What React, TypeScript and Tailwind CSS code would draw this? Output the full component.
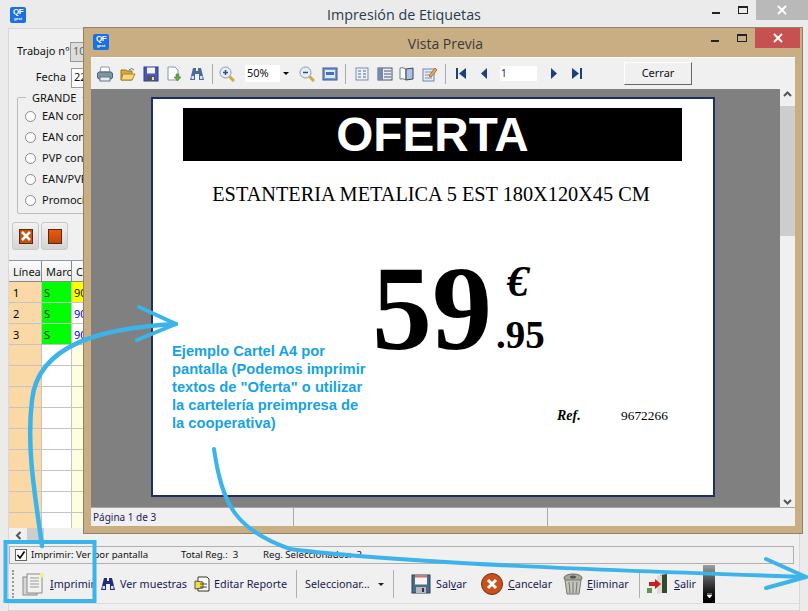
import React from "react";

const Logo = () => (
  <div className="w-4 h-4 rounded-[2px] bg-[#1c6fe0] flex flex-col items-center justify-center leading-none text-white font-bold text-[8px] [font-family:'Liberation_Sans',sans-serif]">
    <span className="tracking-[-0.5px] h-[9px]">QF</span>
    <span className="text-[4px] h-[5px]">gest</span>
  </div>
);

const Caption = ({ dark }: { dark?: boolean }) => (
  <div className="flex items-start h-full">
    <svg width="46" height="20" viewBox="0 0 46 20">
      <rect x="2" y="12" width="8" height="2" fill="#222" />
      <rect x="28.5" y="6.5" width="9" height="7" fill="none" stroke="#222" />
      <rect x="28" y="6" width="10" height="2" fill="#222" />
    </svg>
    <div className={`${dark ? "w-[45px] bg-[#c75050]" : "w-[52px] bg-[#b9b9b9]"} h-5 flex items-center justify-center`}>
      <svg width="10" height="10" viewBox="0 0 10 10">
        <path d="M1 1 L9 9 M9 1 L1 9" stroke="#fff" strokeWidth="2" />
      </svg>
    </div>
  </div>
);

const Radio = ({ label }: { label: string }) => (
  <div className="flex items-center gap-[6px] h-[21px]">
    <span className="w-[11px] h-[11px] rounded-full bg-white border border-[#8a8a8a]" />
    <span className="whitespace-nowrap">{label}</span>
  </div>
);

const I = ({ children, w = 16 }: { children: React.ReactNode; w?: number }) => (
  <svg width={w} height="16" viewBox={`0 0 ${w} 16`} className="shrink-0">
    {children}
  </svg>
);

const PrintI = () => (
  <I>
    <path d="M4 1h8l1 5H3z" fill="#fff" stroke="#8899aa" />
    <rect x="0.5" y="6" width="15" height="7" rx="2" fill="#7f93ad" stroke="#4d6078" />
    <rect x="3" y="11" width="10" height="4" fill="#e8edf3" stroke="#66778c" />
    <rect x="10" y="8" width="2" height="2" fill="#3c3" />
  </I>
);
const FolderI = () => (
  <I>
    <path d="M1 4h5l1 1h5v9H1z" fill="#d9a93c" stroke="#9a7420" />
    <path d="M3 8h12l-3 6H1z" fill="#f6d77b" stroke="#a8852c" />
    <path d="M9 4 q3 -3 5 0" fill="none" stroke="#5c7aa0" />
  </I>
);
const SaveI = () => (
  <I>
    <rect x="1" y="1" width="14" height="14" fill="#4a58b8" stroke="#2f3a80" />
    <rect x="4" y="1.5" width="8" height="6" fill="#f3f3f3" />
    <rect x="4" y="10" width="8" height="5" fill="#555" />
    <rect x="9" y="11" width="2" height="3" fill="#ddd" />
  </I>
);
const ExportI = () => (
  <I>
    <path d="M2 1h7l3 3v10H2z" fill="#fff" stroke="#8899aa" />
    <path d="M10 8h3v3h2l-3.5 4L8 11h2z" fill="#66a844" stroke="#3c7a2a" strokeWidth="0.5" />
  </I>
);
const BinocI = ({ dark }: { dark?: boolean }) => (
  <I>
    <path d="M4 2h3v3h2V2h3l3 12h-5V8H6v6H1z" fill={dark ? "#1e2f78" : "#4a6a9e"} />
    <rect x="2.5" y="10" width="2.5" height="3" fill="#d5e0f0" />
    <rect x="11" y="10" width="2.5" height="3" fill="#d5e0f0" />
  </I>
);
const ZoomI = ({ minus }: { minus?: boolean }) => (
  <I>
    <circle cx="6.5" cy="6.5" r="5.5" fill="#e8eef6" stroke="#8a9aac" />
    <path d="M10.5 10.5 L15 15" stroke="#d0a83c" strokeWidth="3" />
    <path d={minus ? "M4 6.5h5" : "M4 6.5h5M6.5 4v5"} stroke="#2f4f80" strokeWidth="1.5" />
  </I>
);
const PageI = ({ kind }: { kind: number }) => (
  <I>
    {kind === 0 && (
      <>
        <rect x="1" y="2" width="14" height="12" fill="#6f9ae0" stroke="#41577c" />
        <rect x="3" y="4" width="10" height="8" fill="#dfe9f8" />
        <rect x="4" y="6" width="8" height="3" fill="#3f6fc0" />
      </>
    )}
    {kind === 1 && (
      <>
        <rect x="2" y="2" width="12" height="12" fill="#eef2f8" stroke="#7d8da4" />
        <path d="M4 5h3M9 5h3M4 8h3M9 8h3M4 11h3M9 11h3" stroke="#4a6a9e" />
      </>
    )}
    {kind === 2 && (
      <>
        <rect x="1" y="2" width="14" height="12" fill="#eef2f8" stroke="#44556e" />
        <rect x="1" y="2" width="5" height="12" fill="#7389ad" />
        <path d="M7 5h7M7 8h7M7 11h7" stroke="#44556e" />
      </>
    )}
    {kind === 3 && (
      <>
        <path d="M1 2 q3 -1 6 1 v11 q-3 -2 -6 -1z" fill="#fff" stroke="#777" />
        <path d="M7 3 l7 -1 v11 l-7 1z" fill="#a9c3ea" stroke="#444" />
      </>
    )}
    {kind === 4 && (
      <>
        <rect x="1" y="3" width="11" height="12" fill="#e4ecf7" stroke="#6f86a8" />
        <path d="M3 6h7M3 9h7M3 12h7" stroke="#7f93ad" />
        <path d="M7 10 L13 2 L15 4 L9 11z" fill="#e6b93c" stroke="#a33" strokeWidth="0.7" />
      </>
    )}
  </I>
);
const Nav = ({ d, w = 10 }: { d: string; w?: number }) => (
  <svg width={w} height="11" viewBox={`0 0 ${w} 11`}>
    <path d={d} fill="#1d3f7c" />
  </svg>
);

const Row = ({ n, s, c, color }: { n?: string; s?: boolean; c?: string; color?: string }) => (
  <div className="flex h-[21px] border-b border-[#c4c4c4]">
    <div className="w-[33px] bg-[#fbd9a6] border-r border-[#c4c4c4] pl-[4px] leading-[21px] text-black">{n}</div>
    <div className={`w-[30px] border-r border-[#c4c4c4] pl-[2px] leading-[21px] ${s ? "bg-[#00ff00]" : "bg-white"}`}>{s ? "S" : ""}</div>
    <div className={`flex-1 pl-[2px] leading-[21px] ${color ?? "bg-[#fffde0]"}`}>{c}</div>
  </div>
);

const ToolBtn = ({ icon, label, className = "" }: { icon: React.ReactNode; label: React.ReactNode; className?: string }) => (
  <div className={`flex items-center gap-[4px] whitespace-nowrap shrink-0 ${className}`}>
    {icon}
    <span>{label}</span>
  </div>
);

export default function App() {
  const blank = Array.from({ length: 9 });
  return (
    <div className="relative w-[808px] h-[611px] overflow-hidden bg-[#ebebeb] text-[11px] text-[#111] [font-family:'Noto_Sans','Liberation_Sans',sans-serif]">
      {/* main window */}
      <div className="flex flex-col h-full">
        <div className="relative h-[28px] shrink-0 flex items-start justify-between pl-[10px]">
          <div className="pt-[7px]"><Logo /></div>
          <div className="absolute inset-x-0 top-[4px] text-center text-[14.3px] text-[#2b3a4a] [font-family:'Open_Sans',sans-serif]">Impresión de Etiquetas</div>
          <div className="relative"><Caption /></div>
        </div>
        <div className="mx-[8px] flex-1 bg-[#f0f0f0] border border-[#d8d8d8] flex flex-col min-h-0">
          <div className="pl-[8px] pt-[10px] h-[231px] shrink-0">
            <div className="flex items-center h-[25px] whitespace-nowrap">
              <span className="w-[53px]">Trabajo nº</span>
              <span className="border border-[#999] bg-[#ddd] w-[60px] h-[20px] px-[2px] text-[#666]">10</span>
            </div>
            <div className="flex items-center h-[25px] pt-[2px]">
              <span className="w-[49px] pl-[18px] text-right">Fecha</span>
              <span className="border border-[#999] bg-white w-[60px] h-[20px] px-[2px] ml-[5px]">22</span>
            </div>
            <div className="relative mt-[8px] border border-[#bcbcbc] rounded-[2px] w-[100px] h-[117px] pl-[7px] pt-[8px]">
              <span className="absolute left-[8px] -top-[8px] bg-[#f0f0f0] px-[6px]">GRANDE</span>
              <Radio label="EAN con" />
              <Radio label="EAN con" />
              <Radio label="PVP con" />
              <Radio label="EAN/PVP" />
              <Radio label="Promoción" />
            </div>
            <div className="flex gap-[2px] mt-[8px] -ml-[5px]">
              <div className="w-[27px] h-[28px] rounded-[3px] bg-gradient-to-b from-[#f2f2f2] to-[#d4d4d4] border border-[#c8c8c8] flex items-center justify-center">
                <div className="w-[14px] h-[15px] bg-[#c8500e] border border-[#5a2a10] flex items-center justify-center">
                  <svg width="10" height="10" viewBox="0 0 10 10"><path d="M1 1L9 9M9 1L1 9" stroke="#fff" strokeWidth="2.5" /></svg>
                </div>
              </div>
              <div className="w-[27px] h-[28px] rounded-[3px] bg-gradient-to-b from-[#f2f2f2] to-[#d4d4d4] border border-[#c8c8c8] flex items-center justify-center">
                <div className="w-[14px] h-[15px] bg-gradient-to-b from-[#ee5a08] to-[#b8480e] border border-[#5a2a10]" />
              </div>
            </div>
          </div>
          <div className="flex-1 min-h-0 overflow-hidden border-t border-[#8a9bb0] bg-white">
            <div className="flex h-[21px] border-b border-[#8a8a8a] bg-gradient-to-b from-[#fafafa] to-[#ececec]">
              <div className="w-[33px] border-r border-[#8a8a8a] pl-[4px] leading-[21px] overflow-hidden">Línea</div>
              <div className="w-[30px] border-r border-[#8a8a8a] pl-[4px] leading-[21px] overflow-hidden">Marc</div>
              <div className="flex-1 pl-[4px] leading-[21px]">C</div>
            </div>
            <Row n="1" s c="90" color="bg-[#ffff00]" />
            <Row n="2" s c="90" color="bg-white text-[#0000ff]" />
            <Row n="3" s c="90" color="bg-white text-[#0000ff]" />
            {blank.map((_, i) => <Row key={i} />)}
          </div>
          <div className="h-[15px] shrink-0 bg-[#f0f0f0] flex items-center pl-[6px]">
            <svg width="7" height="9" viewBox="0 0 7 9"><path d="M5.5 1L2 4.5 5.5 8" fill="none" stroke="#555" strokeWidth="2" /></svg>
            <div className="ml-[5px] w-[17px] h-[15px] bg-[#cdcdcd]" />
          </div>
          <div className="h-[18px] shrink-0 mt-[3px] mr-[5px] border border-[#b0b0b0] bg-[#f0f0f0] flex items-center text-[9.6px] pl-[5px] whitespace-nowrap">
            <span className="w-[12px] h-[12px] border border-[#666] bg-white flex items-center justify-center mr-[4px]">
              <svg width="10" height="10" viewBox="0 0 10 10"><path d="M1.5 5 L4 8 L8.5 1.5" fill="none" stroke="#000" strokeWidth="1.6" /></svg>
            </span>
            <span className="w-[150px]">Imprimir: Ver por pantalla</span>
            <span className="w-[82px]">Total Reg.:&nbsp; 3</span>
            <span>Reg. Seleccionados:&nbsp; 3</span>
          </div>
          <div className="h-[38px] shrink-0 mt-[1px] flex items-center text-[10.8px] text-[#1a1a50]">
            <div className="w-px h-[28px] border-l-2 border-dotted border-[#999] ml-[3px] mr-[8px]" />
            <ToolBtn className="w-[77px]" icon={<svg width="24" height="24" viewBox="0 0 24 24"><rect x="1" y="5" width="14" height="18" fill="#d8d8d8" stroke="#8a8a8a" /><rect x="5" y="2" width="15" height="19" fill="#f2f2ee" stroke="#8a8a8a" /><path d="M8 6h9M8 9h9M8 12h9M8 15h9" stroke="#999" /><circle cx="20" cy="3" r="2.5" fill="#f6e9a0" /></svg>} label={<><u>I</u>mprimir</>} />
            <ToolBtn className="w-[94px] ml-[1px] gap-[3px]" icon={<BinocI dark />} label="Ver muestras" />
            <ToolBtn className="w-[102px] gap-[3px]" icon={<svg width="16" height="16" viewBox="0 0 16 16"><path d="M4 1h9l2 2v12H4z" fill="#fff" stroke="#333" /><path d="M1 5l8 1v6l-8 1z" fill="#f0e040" stroke="#555" /><path d="M6 8h7M6 11h7" stroke="#444" /></svg>} label="Editar Reporte" />
            <div className="w-px h-[28px] bg-[#b0b0b0] shrink-0" />
            <div className="flex items-center w-[96px] pl-[8px] gap-[8px] whitespace-nowrap shrink-0">
              <span>Seleccionar...</span>
              <span className="w-0 h-0 border-x-[3px] border-x-transparent border-t-[3px] border-t-[#222]" />
            </div>
            <div className="w-px h-[28px] bg-[#b0b0b0] shrink-0" />
            <ToolBtn className="w-[87px] pl-[17px] gap-[5px]" icon={<svg width="20" height="20" viewBox="0 0 20 20"><rect x="1" y="1" width="18" height="18" fill="#4a6a8a" stroke="#2f4358" /><rect x="4" y="1.5" width="12" height="9" fill="#f4f4f4" /><rect x="4" y="1.5" width="12" height="2" fill="#d07070" /><rect x="5" y="13" width="10" height="6" fill="#b8b8b8" /><rect x="11" y="14" width="2" height="4" fill="#333" /></svg>} label={<>Sal<u>v</u>ar</>} />
            <ToolBtn className="w-[82px] gap-[5px]" icon={<svg width="22" height="22" viewBox="0 0 22 22"><circle cx="11" cy="11" r="10.5" fill="#c8501c" stroke="#7a2f10" /><path d="M7 7L15 15M15 7L7 15" stroke="#fff" strokeWidth="3" /></svg>} label={<><u>C</u>ancelar</>} />
            <ToolBtn className="w-[76px] gap-[4px]" icon={<svg width="20" height="24" viewBox="0 0 20 24"><ellipse cx="10" cy="6" rx="9" ry="4" fill="#a8a89c" stroke="#666" /><ellipse cx="10" cy="5" rx="3" ry="1.5" fill="#555" /><path d="M2 8l2 14h12l2-14z" fill="#c4c4b8" stroke="#777" /><path d="M6 10l1 11M10 10v11M14 10l-1 11" stroke="#777" /></svg>} label={<><u>E</u>liminar</>} />
            <div className="w-px h-[28px] bg-[#b0b0b0] shrink-0" />
            <ToolBtn className="w-[63px] pl-[7px] gap-[5px]" icon={<svg width="22" height="22" viewBox="0 0 22 22"><path d="M13 2l7-1v19h-7z" fill="#2f4a2f" /><path d="M10 3l5-1v18l-5 1z" fill="#dcdcd4" /><path d="M2 9h6V6l6 5-6 5v-3H2z" fill="#c82020" /><rect x="0" y="15" width="5" height="5" fill="#5a9a50" /></svg>} label={<><u>S</u>alir</>} />
            <div className="w-[12px] h-[38px] shrink-0 bg-gradient-to-b from-[#a0a0a0] to-[#000] flex items-end justify-center pb-[4px]">
              <svg width="7" height="6" viewBox="0 0 7 6"><path d="M1 0h5M1 2h5L3.5 5z" stroke="#fff" fill="#fff" strokeWidth="0.7" /></svg>
            </div>
          </div>
          <div className="h-[7px] shrink-0 border-t border-[#dcdcdc]" />
        </div>
      </div>

      {/* preview window */}
      <div className="absolute left-[83px] top-[27px] w-[720px] h-[507px] bg-[#c9ae84] border border-[#8f826c] flex flex-col px-[7px] pb-[7px]">
        <div className="relative h-[29px] shrink-0 flex items-start justify-between -mr-[5px]">
          <div className="pt-[6px] pl-[2px]"><Logo /></div>
          <div className="absolute inset-x-0 top-[6px] text-center text-[14px] leading-[19px] text-[#3a3a3a] [font-family:'Open_Sans',sans-serif]">Vista Previa</div>
          <div className="relative"><Caption dark /></div>
        </div>
        <div className="flex-1 min-h-0 bg-[#f0f0f0] flex flex-col border-t border-[#fff]">
          <div className="h-[31px] shrink-0 flex items-center pl-[6px] gap-[7px]">
            <PrintI /><FolderI /><SaveI /><ExportI /><BinocI />
            <div className="w-px h-[20px] bg-[#a8a8a8] shrink-0" />
            <div className="-ml-[1px]"><ZoomI /></div>
            <div className="ml-[3px] w-[47px] h-[17px] bg-white flex items-center justify-between pl-[2px] text-[11px] text-[#111] overflow-hidden">
              <span>50%</span>
              <span className="w-[12px] h-[17px] bg-[#f0f0f0] flex items-center justify-center"><span className="w-0 h-0 border-x-[3px] border-x-transparent border-t-[3px] border-t-black" /></span>
            </div>
            <ZoomI minus /><PageI kind={0} />
            <div className="w-px h-[20px] bg-[#a8a8a8] shrink-0" />
            <div className="ml-[1px]"><PageI kind={1} /></div>
            <PageI kind={2} />
            <div className="-ml-[1px]"><PageI kind={3} /></div>
            <PageI kind={4} />
            <div className="w-px h-[20px] bg-[#a8a8a8] shrink-0" />
            <div className="ml-[3px] flex items-center gap-[14px]">
              <Nav d="M0 0h2v11H0zM10 0v11L3 5.5z" />
              <Nav d="M7 0v11L1 5.5z" w={7} />
            </div>
            <div className="ml-[6px] w-[37px] h-[15px] bg-white text-[10px] pl-[1px] leading-[15px] text-[#112266]">1</div>
            <div className="flex items-center gap-[14px] ml-[7px]">
              <Nav d="M0 0v11L6 5.5z" w={7} />
              <Nav d="M0 0v11L7 5.5zM8 0h2v11H8z" />
            </div>
            <div className="ml-[35px] w-[68px] h-[23px] bg-[#f0f0f0] border border-t-white border-l-white border-r-[#666] border-b-[#666] flex items-center justify-center text-[11px]">Cerrar</div>
          </div>
          <div className="flex-1 min-h-0 flex">
            <div className="flex-1 bg-[#808080] pl-[60px] pt-[8px] pb-[10px]">
              <div className="w-[564px] h-[400px] bg-white border-2 border-[#1d2f66] flex flex-col items-center [font-family:'Liberation_Serif',serif] text-black">
                <div className="mt-[9px] ml-[-1px] w-[499px] h-[53px] shrink-0 bg-black flex items-center justify-center text-white font-bold text-[47.7px] [font-family:'Liberation_Sans',sans-serif] leading-none">OFERTA</div>
                <div className="mt-[21px] -ml-[4px] text-[20.3px] leading-[24px] whitespace-nowrap">ESTANTERIA METALICA 5 EST 180X120X45 CM</div>
                <div className="mt-[43px] flex items-start self-start ml-[219px] font-bold">
                  <span className="text-[120px] leading-[120px]">59</span>
                  <div className="ml-[4px] mt-[11px] flex flex-col">
                    <span className="text-[44px] leading-[44px] italic ml-[11px]">€</span>
                    <span className="text-[39px] leading-[40px] mt-[11px]">.95</span>
                  </div>
                </div>
                <div className="mt-[36px] self-start ml-[404px] flex items-baseline">
                  <span className="font-bold italic text-[14px] w-[64px]">Ref.</span>
                  <span className="text-[13.4px]">9672266</span>
                </div>
              </div>
            </div>
            <div className="w-[15px] bg-[#f0f0f0] flex flex-col items-center justify-between text-[#555] text-[9px] py-[2px] relative">
              <svg width="9" height="6" viewBox="0 0 9 6"><path d="M1 5L4.5 1.5 8 5" fill="none" stroke="#555" strokeWidth="2" /></svg>
              <div className="absolute top-[17px] inset-x-0 h-[130px] bg-[#cdcdcd]" />
              <svg width="9" height="6" viewBox="0 0 9 6"><path d="M1 1L4.5 4.5 8 1" fill="none" stroke="#555" strokeWidth="2" /></svg>
            </div>
          </div>
          <div className="h-[19px] shrink-0 flex items-center text-[10px] text-[#222060] border-t border-[#a8a8a8] bg-[#f0f0f0]">
            <div className="w-[203px] pl-[2px] border-r border-[#a8a8a8] h-full leading-[18px]">Página 1 de 3</div>
            <div className="w-[254px] border-r border-[#a8a8a8] h-full" />
            <div className="flex-1" />
          </div>
        </div>
      </div>

      {/* annotation */}
      <div className="absolute left-[172px] top-[342px] w-[210px] text-[14.7px] leading-[18px] font-bold text-[#16a3e6] [font-family:'Liberation_Sans',sans-serif] whitespace-nowrap">
        Ejemplo Cartel A4 por<br />pantalla (Podemos imprimir<br />textos de "Oferta" o utilizar<br />la cartelería preimpresa de<br />la cooperativa)
      </div>
      <svg className="absolute inset-0 pointer-events-none" width="808" height="611" viewBox="0 0 808 611">
        <g fill="none" stroke="#3ab4ea" strokeLinecap="round" strokeLinejoin="round">
          <rect x="5.5" y="542" width="89" height="59" strokeWidth="4" strokeLinejoin="miter" />
          <path d="M42 546 C36 500 26 450 32 400 C38 345 100 328 176 324" strokeWidth="4.5" />
          <path d="M139 307 L176 324 L137 340" strokeWidth="4" />
          <path d="M214 449 C222 505 236 530 290 549 C400 563 600 570 806 577" strokeWidth="4" />
          <path d="M766 559 L806 577 L766 588" strokeWidth="4" />
        </g>
      </svg>
    </div>
  );
}
